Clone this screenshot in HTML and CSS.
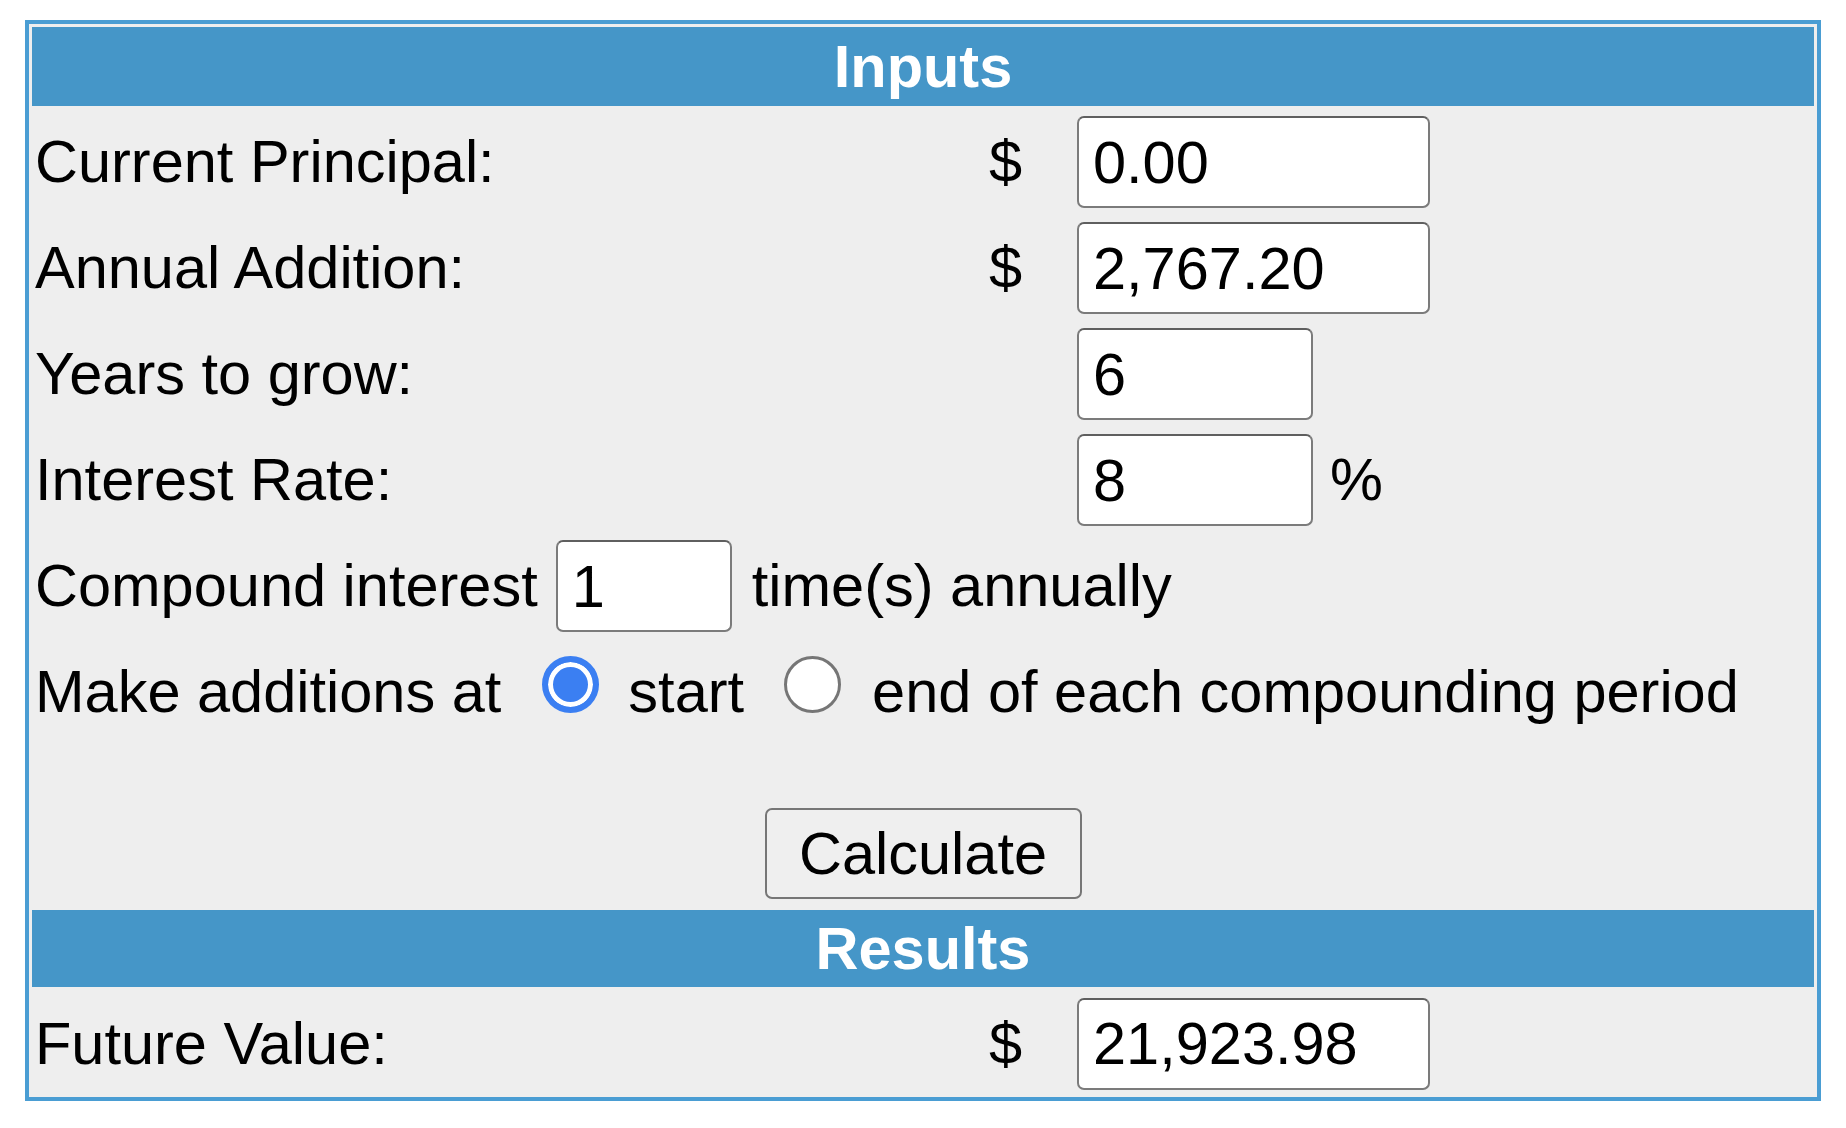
FILE: index.html
```html
<!DOCTYPE html>
<html lang="en">
<head>
<meta charset="utf-8">
<title>Compound Interest Calculator</title>
<link rel="stylesheet" href="styles.css">
</head>
<body>
<form class="calc" onsubmit="return false">
  <div class="band band-inputs">Inputs</div>

  <div class="row grid3">
    <span class="label">Current Principal:</span>
    <span class="cur">$</span>
    <span class="field"><input class="box wide" type="text" value="0.00"></span>
  </div>

  <div class="row grid3">
    <span class="label">Annual Addition:</span>
    <span class="cur">$</span>
    <span class="field"><input class="box wide" type="text" value="2,767.20"></span>
  </div>

  <div class="row grid3">
    <span class="label">Years to grow:</span>
    <span class="cur"></span>
    <span class="field"><input class="box narrow" type="text" value="6"></span>
  </div>

  <div class="row grid3">
    <span class="label">Interest Rate:</span>
    <span class="cur"></span>
    <span class="field"><input class="box narrow" type="text" value="8"><span class="pct">%</span></span>
  </div>

  <div class="row flow">
    <span>Compound interest</span>
    <input class="box tiny" type="text" value="1">
    <span>time(s) annually</span>
  </div>

  <div class="row flow">
    <span>Make additions at</span>
    <input class="radio radio-start" type="radio" name="when" checked>
    <span>start</span>
    <input class="radio radio-end" type="radio" name="when">
    <span class="after-end">end of each compounding period</span>
  </div>

  <div class="action">
    <button class="btn" type="button">Calculate</button>
  </div>

  <div class="band band-results">Results</div>

  <div class="row grid3 row-result">
    <span class="label">Future Value:</span>
    <span class="cur">$</span>
    <span class="field"><input class="box wide" type="text" value="21,923.98"></span>
  </div>
</form>
</body>
</html>
```

FILE: styles.css
```css
html, body {
  margin: 0;
  padding: 0;
  background: #ffffff;
}

body {
  padding: 20px 0 0 25px;
  font-family: "Liberation Sans", Arial, Helvetica, sans-serif;
  font-size: 59.5px;
  color: #000000;
}

.calc {
  box-sizing: border-box;
  width: 1796px;
  margin: 0;
  border: 4px solid #4a9dd3;
  background: #eeeeee;
  padding: 3px;
  display: flex;
  flex-direction: column;
  gap: 3px;
}

.band {
  background: #4596c8;
  color: #ffffff;
  font-weight: bold;
  display: flex;
  align-items: center;
  justify-content: center;
  line-height: 1;
}

.band-inputs {
  height: 79px;
}

.band-results {
  height: 77px;
}

.row {
  box-sizing: border-box;
  height: 103px;
  padding: 3px 0 0 3px;
  line-height: 68px;
}

.row-result {
  height: 104px;
}

.grid3 {
  display: grid;
  grid-template-columns: 954px 88px 1fr;
  align-items: center;
}

.field {
  display: flex;
  align-items: center;
}

.pct {
  margin-left: 17px;
}

.flow {
  display: flex;
  align-items: center;
}

.box {
  box-sizing: border-box;
  height: 92px;
  margin: 0;
  padding: 10px 14px;
  font: inherit;
  line-height: 68px;
  color: #000000;
  background: #ffffff;
  border: 2px solid #7b7b7b;
  border-top-color: #5f5f5f;
  border-radius: 7px;
  outline: none;
}

.wide {
  width: 353px;
}

.narrow {
  width: 236px;
}

.tiny {
  width: 176px;
  margin: 0 20px 0 18px;
}

.radio {
  -webkit-appearance: none;
  appearance: none;
  box-sizing: border-box;
  width: 57px;
  height: 57px;
  margin: 0 0 16px 0;
  border-radius: 50%;
  background: #ffffff;
  border: 3px solid #767676;
}

.radio:checked {
  background: #3b7ff2;
  border: 6px solid #3b7ff2;
  box-shadow: inset 0 0 0 5px #ffffff;
}

.radio-start {
  margin-left: 41px;
  margin-right: 29px;
}

.radio-end {
  margin-left: 40px;
  margin-right: 31px;
}

.action {
  height: 162px;
  box-sizing: border-box;
  padding-bottom: 8px;
  display: flex;
  justify-content: center;
  align-items: flex-end;
}

.btn {
  box-sizing: border-box;
  width: 317px;
  height: 91px;
  margin: 0;
  padding: 0;
  font: inherit;
  line-height: 68px;
  color: #000000;
  background: #efefef;
  border: 2px solid #767676;
  border-radius: 7px;
}
```
